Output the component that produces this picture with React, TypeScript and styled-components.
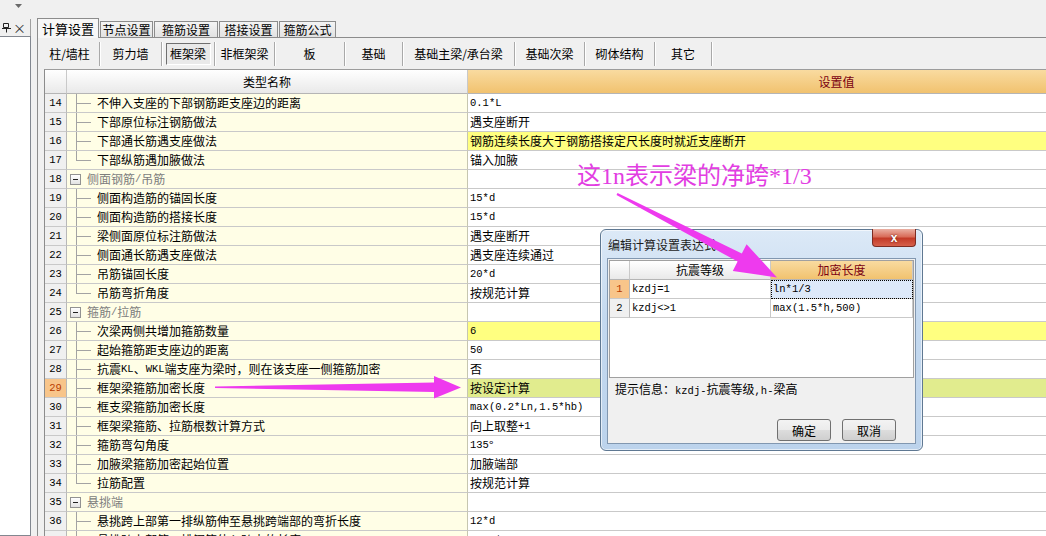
import React from 'react';
import styled, { createGlobalStyle } from 'styled-components';

const GlobalStyle = createGlobalStyle`
  * { box-sizing: border-box; }
  html, body { margin: 0; padding: 0; background: #f0f0f0; }
  body {
    font-family: "Noto Sans CJK SC", "Liberation Sans", sans-serif;
    font-size: 12px;
    color: #000;
    overflow: hidden;
  }
`;

const Root = styled.div`
  position: relative;
  width: 1046px;
  height: 536px;
  overflow: hidden;
  display: flex;
  flex-direction: column;
  background: #f0f0f0;
`;

const TopStrip = styled.div`
  height: 18px;
  flex: none;
  display: flex;
  align-items: flex-start;
  padding: 4px 0 0 15px;
`;

const Body = styled.div`
  flex: 1;
  display: flex;
  min-height: 0;
`;

/* left dock panel */
const LeftPanel = styled.div`
  width: 31px;
  flex: none;
  display: flex;
  flex-direction: column;
  margin-top: 1px;
`;

const PanelHeader = styled.div`
  height: 17px;
  display: flex;
  align-items: center;
  justify-content: space-between;
  padding: 0 4px 0 2px;
  border-right: 1px solid #a0a0a0;
  color: #333;
  font-size: 13px;
`;

const PanelBody = styled.div`
  flex: 1;
  background: #fff;
  border: 1px solid #828790;
  border-left: none;
`;

/* workspace with tabs */
const Workspace = styled.div`
  flex: 1;
  margin-left: 6px;
  display: flex;
  flex-direction: column;
  min-width: 0;
`;

const TabBar = styled.div`
  height: 19px;
  flex: none;
  display: flex;
  align-items: flex-end;
  gap: 1px;
  position: relative;
  z-index: 1;
`;

const Tab = styled.div<{ $w: number; $active?: boolean }>`
  width: ${p => p.$w}px;
  height: ${p => (p.$active ? 20 : 16)}px;
  margin-bottom: ${p => (p.$active ? -1 : 0)}px;
  display: flex;
  align-items: center;
  justify-content: center;
  padding-top: ${p => (p.$active ? 1 : 0)}px;
  border: 1px solid #8c8c8c;
  border-bottom: none;
  background: ${p => (p.$active ? '#f7f7f7' : 'linear-gradient(#f4f4f4, #e2e2e2)')};
  font-size: ${p => (p.$active ? 13 : 12)}px;
  line-height: 14px;
`;

const Frame = styled.div`
  flex: 1;
  min-height: 0;
  display: flex;
  flex-direction: column;
  border-top: 1px solid #8c8c8c;
  border-left: 1px solid #8c8c8c;
`;

const Toolbar = styled.div`
  height: 31px;
  flex: none;
  display: flex;
  align-items: center;
  padding-left: 2px;
`;

const ToolBtn = styled.div<{ $w: number }>`
  width: ${p => p.$w}px;
  height: 24px;
  flex: none;
  display: flex;
  align-items: center;
  justify-content: center;
  border-right: 1px solid #a9a9a9;
  box-shadow: 1px 0 0 #fff;
  line-height: 14px;
`;

const Pressed = styled.span`
  width: 45px;
  height: 22px;
  display: flex;
  align-items: center;
  justify-content: center;
  border: 1px solid;
  border-color: #6f6f6f #fff #fff #6f6f6f;
  background: #e9e9e9;
`;

/* property grid */
const GridWrap = styled.div`
  flex: 1;
  min-height: 0;
  overflow: hidden;
  margin-left: 6px;
`;

const Table = styled.div`
  display: grid;
  grid-template-columns: 22px 401px 738px;
  grid-template-rows: 24px;
  grid-auto-rows: 19px;
  width: max-content;
  border-left: 1px solid #8c8c8c;
  border-top: 1px solid #9c9c9c;
`;

const Cell = styled.div`
  display: flex;
  align-items: center;
  white-space: nowrap;
  overflow: hidden;
  border-right: 1px solid #c9c9c9;
  border-bottom: 1px solid #c9c9c9;
  line-height: 16px;
`;

const HeadCell = styled(Cell)<{ $orange?: boolean }>`
  justify-content: center;
  background: ${p => (p.$orange ? 'linear-gradient(#f9dba0, #f1c26f)' : 'linear-gradient(#ffffff, #e9e9e9)')};
  color: ${p => (p.$orange ? '#7a0010' : '#000')};
  border-bottom-color: #b5b5b5;
`;

const NumCell = styled(Cell)<{ $active?: boolean }>`
  justify-content: center;
  background: ${p => (p.$active ? '#f8c58a' : '#f0f0f0')};
  color: ${p => (p.$active ? '#b83a00' : '#000')};
  border-right-color: #b8b8b8;
`;

const NameCell = styled(Cell)`
  align-items: stretch;
  background: #fffee6;
  border-right-color: #c6c6b0;
`;

const Label = styled.span<{ $group?: boolean }>`
  display: flex;
  align-items: center;
  color: ${p => (p.$group ? '#7d7d7d' : '#000')};
`;

const Guide = styled.span<{ $last?: boolean }>`
  width: 15px;
  flex: none;
  margin: 0 6px 0 9px;
  display: flex;
  flex-direction: column;
  &::before {
    content: '';
    height: 9px;
    border-left: 1px solid #a3a3a3;
    border-bottom: 1px solid #a3a3a3;
  }
  &::after {
    content: '';
    flex: 1;
    border-left: 1px solid ${p => (p.$last ? 'transparent' : '#a3a3a3')};
  }
`;

const Toggle = styled.span`
  width: 11px;
  height: 11px;
  flex: none;
  align-self: center;
  margin: 0 6px 0 3px;
  border: 1px solid #929292;
  background: linear-gradient(#ffffff, #e2e2e2);
  display: flex;
  align-items: center;
  justify-content: center;
  &::after {
    content: '';
    width: 5px;
    height: 1px;
    background: #222;
  }
`;

type Tone = 'yellow' | 'green' | undefined;

const ValueCell = styled(Cell)<{ $tone?: Tone }>`
  padding-left: 2px;
  background: ${p => (p.$tone === 'yellow' ? '#ffff80' : p.$tone === 'green' ? '#e1ec8e' : '#fff')};
`;

const Latin = styled.span`
  font-family: "Liberation Mono", monospace;
  font-size: 10.5px;
`;

const Mixed = ({ text }: { text: string }) => (
  <>
    {text.split(/([\x20-\x7e]+)/).map((p, i) =>
      /[\x20-\x7e]/.test(p) ? <Latin key={i}>{p}</Latin> : <React.Fragment key={i}>{p}</React.Fragment>
    )}
  </>
);

/* dialog */
const Dialog = styled.div`
  position: absolute;
  left: 600px;
  top: 229px;
  width: 323px;
  height: 222px;
  display: flex;
  flex-direction: column;
  padding: 0 6px 6px 6px;
  border: 1px solid #5f7892;
  border-radius: 6px;
  background: linear-gradient(#dce9f7, #c4d9ef 40%, #bcd3ec);
  box-shadow: 0 0 0 1px rgba(255, 255, 255, 0.6) inset;
`;

const TitleBar = styled.div`
  height: 28px;
  flex: none;
  display: flex;
  align-items: center;
  justify-content: space-between;
`;

const Title = styled.span`
  padding-left: 1px;
  font-size: 12px;
  color: #1c1c1c;
`;

const CloseBtn = styled.div`
  align-self: flex-start;
  width: 44px;
  height: 18px;
  margin-top: -1px;
  display: flex;
  align-items: center;
  justify-content: center;
  border: 1px solid #7d2c22;
  border-top: none;
  border-radius: 0 0 4px 4px;
  background: linear-gradient(#eab0a3, #d96d5a 45%, #c33b28 55%, #d6604a);
  color: #fff;
  font-family: "Liberation Sans", sans-serif;
  font-weight: bold;
  font-size: 12px;
  text-shadow: 0 0 2px #5a0c00;
`;

const Client = styled.div`
  flex: 1;
  display: flex;
  flex-direction: column;
  border: 1px solid #8197b0;
  background: #f0f0f0;
`;

const ExprGrid = styled.div`
  height: 118px;
  margin: 1px 1px 0 1px;
  display: grid;
  grid-template-columns: 20px 141px 1fr;
  grid-auto-rows: 19px;
  align-content: start;
  background: #fff;
  border: 1px solid #a0a0a0;
`;

const ExprCell = styled(Cell)<{ $selected?: boolean }>`
  padding-left: 2px;
  background: ${p => (p.$selected ? '#dde9f9' : '#fff')};
  outline: ${p => (p.$selected ? '1px dotted #000' : 'none')};
  outline-offset: -1px;
`;

const Hint = styled.div`
  padding: 4px 7px 0;
  line-height: 14px;
`;

const ButtonRow = styled.div`
  margin-top: auto;
  display: flex;
  justify-content: flex-end;
  gap: 11px;
  padding: 0 19px 2px 0;
`;

const DlgButton = styled.button`
  width: 54px;
  height: 22px;
  padding: 0;
  border: 1px solid #707070;
  border-radius: 3px;
  background: linear-gradient(#f3f3f3, #ebebeb 50%, #dddddd 51%, #cfcfcf);
  font-family: inherit;
  font-size: 12px;
  color: #000;
`;

const Annotation = styled.div`
  position: absolute;
  left: 577px;
  top: 161px;
  font-family: "Liberation Serif", "Noto Sans CJK SC", serif;
  font-size: 24px;
  line-height: 30px;
  color: #e23ee2;
  white-space: nowrap;
`;

const Overlay = styled.svg`
  position: absolute;
  left: 0;
  top: 0;
  pointer-events: none;
`;

type Row = {
  n: number;
  name: string;
  value?: string;
  group?: boolean;
  last?: boolean;
  tone?: Tone;
  active?: boolean;
};

const rows: Row[] = [
  { n: 14, name: '不伸入支座的下部钢筋距支座边的距离', value: '0.1*L' },
  { n: 15, name: '下部原位标注钢筋做法', value: '遇支座断开' },
  { n: 16, name: '下部通长筋遇支座做法', value: '钢筋连续长度大于钢筋搭接定尺长度时就近支座断开', tone: 'yellow' },
  { n: 17, name: '下部纵筋遇加腋做法', value: '锚入加腋', last: true },
  { n: 18, name: '侧面钢筋/吊筋', group: true },
  { n: 19, name: '侧面构造筋的锚固长度', value: '15*d' },
  { n: 20, name: '侧面构造筋的搭接长度', value: '15*d' },
  { n: 21, name: '梁侧面原位标注筋做法', value: '遇支座断开' },
  { n: 22, name: '侧面通长筋遇支座做法', value: '遇支座连续通过' },
  { n: 23, name: '吊筋锚固长度', value: '20*d' },
  { n: 24, name: '吊筋弯折角度', value: '按规范计算', last: true },
  { n: 25, name: '箍筋/拉筋', group: true },
  { n: 26, name: '次梁两侧共增加箍筋数量', value: '6', tone: 'yellow' },
  { n: 27, name: '起始箍筋距支座边的距离', value: '50' },
  { n: 28, name: '抗震KL、WKL端支座为梁时，则在该支座一侧箍筋加密', value: '否' },
  { n: 29, name: '框架梁箍筋加密长度', value: '按设定计算', tone: 'green', active: true },
  { n: 30, name: '框支梁箍筋加密长度', value: 'max(0.2*Ln,1.5*hb)' },
  { n: 31, name: '框架梁箍筋、拉筋根数计算方式', value: '向上取整+1' },
  { n: 32, name: '箍筋弯勾角度', value: '135°' },
  { n: 33, name: '加腋梁箍筋加密起始位置', value: '加腋端部' },
  { n: 34, name: '拉筋配置', value: '按规范计算', last: true },
  { n: 35, name: '悬挑端', group: true },
  { n: 36, name: '悬挑跨上部第一排纵筋伸至悬挑跨端部的弯折长度', value: '12*d' },
  { n: 37, name: '悬挑跨上部第二排钢筋伸入跨内的长度', value: '0.75*L' },
];

const tabs: [string, number, boolean?][] = [
  ['计算设置', 62, true],
  ['节点设置', 53],
  ['箍筋设置', 64],
  ['搭接设置', 59],
  ['箍筋公式', 57],
];

const tools: [string, number, boolean?][] = [
  ['柱/墙柱', 60],
  ['剪力墙', 62],
  ['框架梁', 53, true],
  ['非框架梁', 60],
  ['板', 70],
  ['基础', 58],
  ['基础主梁/承台梁', 112],
  ['基础次梁', 70],
  ['砌体结构', 70],
  ['其它', 57],
];

const PinIcon = () => (
  <svg width="9" height="11" viewBox="0 0 9 11">
    <path d="M1.5 1.5h5v4h-5z M0 6.5h9 M4.5 6.5v4" fill="none" stroke="#222" strokeWidth="1" />
  </svg>
);

const DropIcon = () => (
  <svg width="7" height="4" viewBox="0 0 7 4">
    <path d="M0 0h7L3.5 4z" fill="#6a6a6a" />
  </svg>
);

const App: React.FC = () => {
  return (
    <>
      <GlobalStyle />
      <Root>
        <TopStrip>
          <DropIcon />
        </TopStrip>
        <Body>
          <LeftPanel>
            <PanelHeader>
              <PinIcon />
              <span>×</span>
            </PanelHeader>
            <PanelBody />
          </LeftPanel>
          <Workspace>
            <TabBar>
              {tabs.map(([t, w, a]) => (
                <Tab key={t} $w={w} $active={a}>{t}</Tab>
              ))}
            </TabBar>
            <Frame>
              <Toolbar>
                {tools.map(([t, w, p]) => (
                  <ToolBtn key={t} $w={w}>{p ? <Pressed>{t}</Pressed> : t}</ToolBtn>
                ))}
              </Toolbar>
              <GridWrap>
                <Table>
                  <HeadCell />
                  <HeadCell>类型名称</HeadCell>
                  <HeadCell $orange>设置值</HeadCell>
                  {rows.map(r => (
                    <React.Fragment key={r.n}>
                      <NumCell $active={r.active}><Latin>{r.n}</Latin></NumCell>
                      <NameCell>
                        {r.group ? <Toggle /> : <Guide $last={r.last} />}
                        <Label $group={r.group}><Mixed text={r.name} /></Label>
                      </NameCell>
                      <ValueCell $tone={r.tone}>{r.value ? <Mixed text={r.value} /> : null}</ValueCell>
                    </React.Fragment>
                  ))}
                </Table>
              </GridWrap>
            </Frame>
          </Workspace>
        </Body>

        <Annotation>这1n表示梁的净跨*1/3</Annotation>

        <Dialog>
          <TitleBar>
            <Title>编辑计算设置表达式</Title>
            <CloseBtn>x</CloseBtn>
          </TitleBar>
          <Client>
            <ExprGrid>
              <HeadCell />
              <HeadCell>抗震等级</HeadCell>
              <HeadCell $orange>加密长度</HeadCell>
              <NumCell $active><Latin>1</Latin></NumCell>
              <ExprCell><Mixed text="kzdj=1" /></ExprCell>
              <ExprCell $selected><Mixed text="ln*1/3" /></ExprCell>
              <NumCell><Latin>2</Latin></NumCell>
              <ExprCell><Mixed text="kzdj<>1" /></ExprCell>
              <ExprCell><Mixed text="max(1.5*h,500)" /></ExprCell>
            </ExprGrid>
            <Hint>
              <Mixed text="提示信息：kzdj-抗震等级,h-梁高" />
            </Hint>
            <ButtonRow>
              <DlgButton>确定</DlgButton>
              <DlgButton>取消</DlgButton>
            </ButtonRow>
          </Client>
        </Dialog>

        <Overlay width="1046" height="536" viewBox="0 0 1046 536">
          <polygon
            fill="#ee3aee"
            points="617.5,193.1 741.8,253.6 746.6,244.3 777,277.5 732.8,270.9 737.6,261.6 616.5,194.9"
          />
          <polygon
            fill="#ee3aee"
            points="215,386.5 434,382.5 434,376 461,387.5 434,398.5 434,392 215,388"
          />
        </Overlay>
      </Root>
    </>
  );
};

export default App;
